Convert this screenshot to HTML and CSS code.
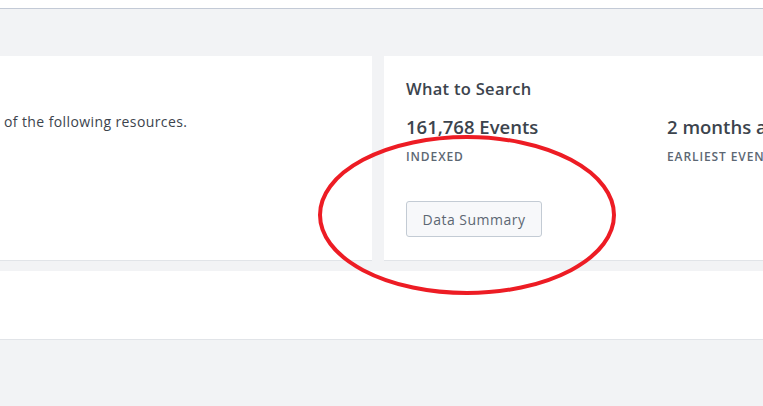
FILE: index.html
```html
<!DOCTYPE html>
<html>
<head>
<meta charset="utf-8">
<link rel="stylesheet" href="styles.css">
</head>
<body>
<div class="page">
  <div class="topbar"></div>
  <div class="band"></div>
  <div class="cards">
    <div class="card card-left">
      <p class="intro">of the following resources.</p>
    </div>
    <div class="card card-right">
      <h2 class="title">What to Search</h2>
      <div class="stats">
        <div class="stat">
          <div class="value">161,768 Events</div>
          <div class="label">INDEXED</div>
          <button class="btn">Data Summary</button>
        </div>
        <div class="stat">
          <div class="value">2 months ago</div>
          <div class="label">EARLIEST EVENT</div>
        </div>
      </div>
    </div>
  </div>
  <div class="gap"></div>
  <div class="panel"></div>
  <svg class="annotation" width="763" height="406" viewBox="0 0 763 406">
    <ellipse cx="467" cy="215" rx="147" ry="78" fill="none" stroke="#ed1c24" stroke-width="4"/>
  </svg>
</div>
</body>
</html>
```
FILE: styles.css
```css
* { box-sizing: border-box; }
html, body { margin: 0; padding: 0; }
body {
  width: 763px;
  height: 406px;
  overflow: hidden;
  background: #f2f3f5;
  font-family: "Open Sans", "Lato", sans-serif;
  color: #3c444d;
}
.page { position: relative; width: 763px; height: 406px; overflow: hidden; }
.topbar {
  height: 9px;
  background: #fff;
  border-bottom: 1px solid #c3cad6;
}
.band { height: 47px; }
.cards {
  display: flex;
  gap: 12px;
  width: 1000px;
  height: 205px;
}
.card {
  background: #fff;
  border-bottom: 1px solid #e1e4e8;
}
.card-left { width: 372px; padding: 57px 0 0 4px; }
.intro { margin: 0; font-size: 14px; letter-spacing: 0.4px; line-height: 18px; }
.card-right { flex: 1; padding: 22px 0 0 22px; }
.title { margin: 0; font-size: 16.5px; letter-spacing: 0.3px; font-weight: 600; line-height: 22px; }
.stats { display: flex; margin-top: 15px; }
.stat { width: 261px; white-space: nowrap; }
.value { font-size: 18.5px; font-weight: 600; line-height: 24px; }
.label { font-size: 12px; letter-spacing: 0.9px; font-weight: 600; color: #5c6773; margin-top: 10px; line-height: 16px; }
.btn {
  margin-top: 36px;
  width: 136px;
  height: 36px;
  background: #f7f8fa;
  border: 1px solid #c3cbd4;
  border-radius: 3px;
  font-family: inherit;
  font-size: 14px;
  letter-spacing: 0.5px;
  color: #5c6773;
  padding: 0;
}
.gap { height: 10px; }
.panel {
  height: 69px;
  background: #fff;
  border-bottom: 1px solid #e1e4e8;
}
.annotation { position: absolute; left: 0; top: 0; pointer-events: none; }
```
